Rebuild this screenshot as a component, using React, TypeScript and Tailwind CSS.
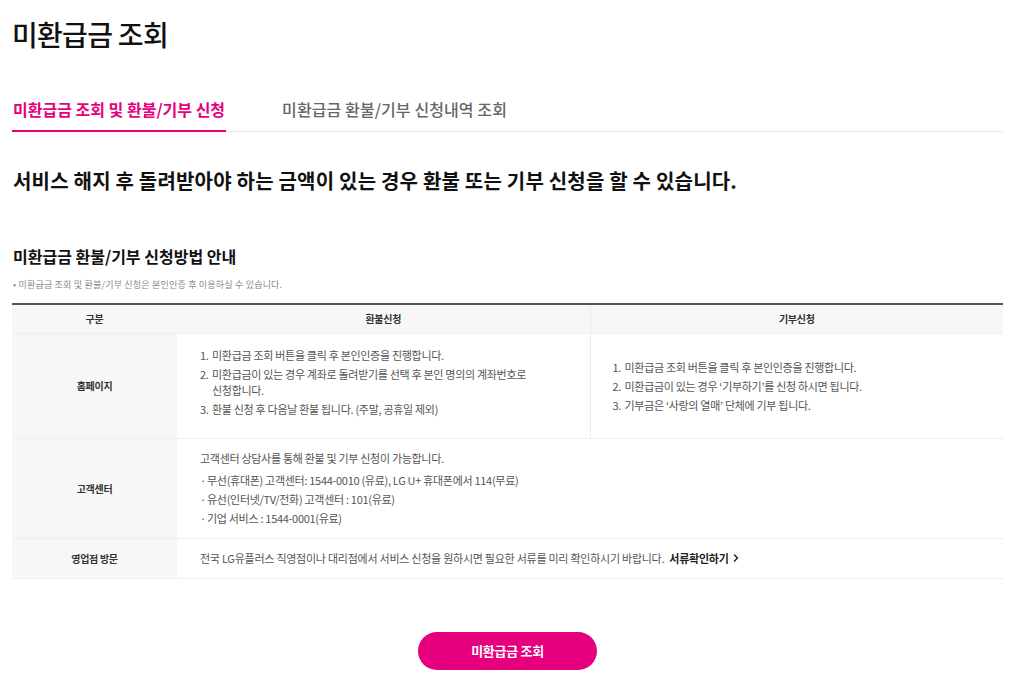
import { ChevronRight } from "lucide-react";

const font = { fontFamily: '"Noto Sans CJK KR", "Noto Sans", sans-serif' };

export default function App() {
  return (
    <div style={font} className="min-h-[698px] bg-white pl-3 pr-[21px] text-[#222]">
      {/* Title */}
      <h1 className="pt-[14px] text-[28px] font-medium leading-[40px] tracking-[-0.7px] text-[#111]">
        미환급금 조회
      </h1>

      {/* Tabs */}
      <div className="mt-[44px] flex border-b border-[#e5e5e5]">
        <div className="-mb-px border-b-2 border-[#e6007e] pb-[10px] pl-px pr-px text-[16px] font-bold leading-[22px] text-[#e6007e]">
          미환급금 조회 및 환불/기부 신청
        </div>
        <div className="ml-[56px] pb-[10px] text-[16px] font-medium leading-[22px] tracking-[0.1px] text-[#666]">
          미환급금 환불/기부 신청내역 조회
        </div>
      </div>

      {/* Headline */}
      <p className="mt-[34px] pl-px text-[20px] font-bold leading-[30px] tracking-[0.2px] text-[#111]">
        서비스 해지 후 돌려받아야 하는 금액이 있는 경우 환불 또는 기부 신청을 할 수 있습니다.
      </p>

      {/* Section heading */}
      <h2 className="mt-[48px] pl-px text-[16px] font-bold leading-[24px] text-[#111]">
        미환급금 환불/기부 신청방법 안내
      </h2>
      <p className="mt-[10px] pl-px text-[9px] leading-[14px] tracking-[0.2px] text-[#888]">
        • 미환급금 조회 및 환불/기부 신청은 본인인증 후 이용하실 수 있습니다.
      </p>

      {/* Table */}
      <table className="mt-[11px] w-full table-fixed border-collapse border-t-2 border-[#555] text-[11px] tracking-[-0.3px]">
        <colgroup>
          <col className="w-[165px]" />
          <col className="w-[413px]" />
          <col />
        </colgroup>
        <thead>
          <tr className="h-[29px] bg-[#f7f7f7] text-[10px] text-[#333]">
            <th className="font-bold">구분</th>
            <th className="border-r border-[#ececec] font-bold">환불신청</th>
            <th className="font-bold">기부신청</th>
          </tr>
        </thead>
        <tbody className="text-[#555]">
          <tr className="h-[105px] border-t border-[#eeeeee]">
            <td className="bg-[#f7f7f7] text-center text-[10px] font-bold text-[#333]">홈페이지</td>
            <td className="border-r border-[#ececec] pl-[23px] pr-4 pt-[13px] align-top leading-[16px]">
              <ol className="space-y-[3px]">
                <li className="flex">
                  <span className="w-[12px] shrink-0">1.</span>
                  <span>미환급금 조회 버튼을 클릭 후 본인인증을 진행합니다.</span>
                </li>
                <li className="flex">
                  <span className="w-[12px] shrink-0">2.</span>
                  <span>
                    미환급금이 있는 경우 계좌로 돌려받기를 선택 후 본인 명의의 계좌번호로
                    <br />
                    신청합니다.
                  </span>
                </li>
                <li className="flex">
                  <span className="w-[12px] shrink-0">3.</span>
                  <span>환불 신청 후 다음날 환불 됩니다. (주말, 공휴일 제외)</span>
                </li>
              </ol>
            </td>
            <td className="pl-[22px] pr-4 leading-[16px]">
              <ol className="space-y-[3px]">
                <li className="flex">
                  <span className="w-[12px] shrink-0">1.</span>
                  <span>미환급금 조회 버튼을 클릭 후 본인인증을 진행합니다.</span>
                </li>
                <li className="flex">
                  <span className="w-[12px] shrink-0">2.</span>
                  <span>미환급금이 있는 경우 ‘기부하기’를 신청 하시면 됩니다.</span>
                </li>
                <li className="flex">
                  <span className="w-[12px] shrink-0">3.</span>
                  <span>기부금은 ‘사랑의 열매’ 단체에 기부 됩니다.</span>
                </li>
              </ol>
            </td>
          </tr>
          <tr className="h-[100px] border-t border-[#eeeeee]">
            <td className="bg-[#f7f7f7] text-center text-[10px] font-bold text-[#333]">고객센터</td>
            <td colSpan={2} className="pl-[23px] leading-[16px]">
              <p>고객센터 상담사를 통해 환불 및 기부 신청이 가능합니다.</p>
              <ul className="mt-[6px] space-y-[3px]">
                <li className="flex">
                  <span className="w-[7px] shrink-0">·</span>
                  <span>무선(휴대폰) 고객센터: 1544-0010 (유료), LG U+ 휴대폰에서 114(무료)</span>
                </li>
                <li className="flex">
                  <span className="w-[7px] shrink-0">·</span>
                  <span>유선(인터넷/TV/전화) 고객센터 : 101(유료)</span>
                </li>
                <li className="flex">
                  <span className="w-[7px] shrink-0">·</span>
                  <span>기업 서비스 : 1544-0001(유료)</span>
                </li>
              </ul>
            </td>
          </tr>
          <tr className="h-[40px] border-y border-[#eeeeee]">
            <td className="bg-[#f7f7f7] text-center text-[10px] font-bold text-[#333]">영업점 방문</td>
            <td colSpan={2} className="pl-[23px] tracking-[-0.25px]">
              <span className="inline-flex items-center">
                전국 LG유플러스 직영점이나 대리점에서 서비스 신청을 원하시면 필요한 서류를 미리 확인하시기 바랍니다.
                <span className="ml-[5px] font-bold text-[#222]">서류확인하기</span>
                <ChevronRight size={12} strokeWidth={3} className="ml-[1px] text-[#222]" />
              </span>
            </td>
          </tr>
        </tbody>
      </table>

      {/* Button */}
      <div className="mt-[53px] flex justify-center">
        <button className="h-[38px] w-[179px] rounded-full bg-[#e6007e] text-[13px] font-bold tracking-[-0.3px] text-white">
          미환급금 조회
        </button>
      </div>
    </div>
  );
}
